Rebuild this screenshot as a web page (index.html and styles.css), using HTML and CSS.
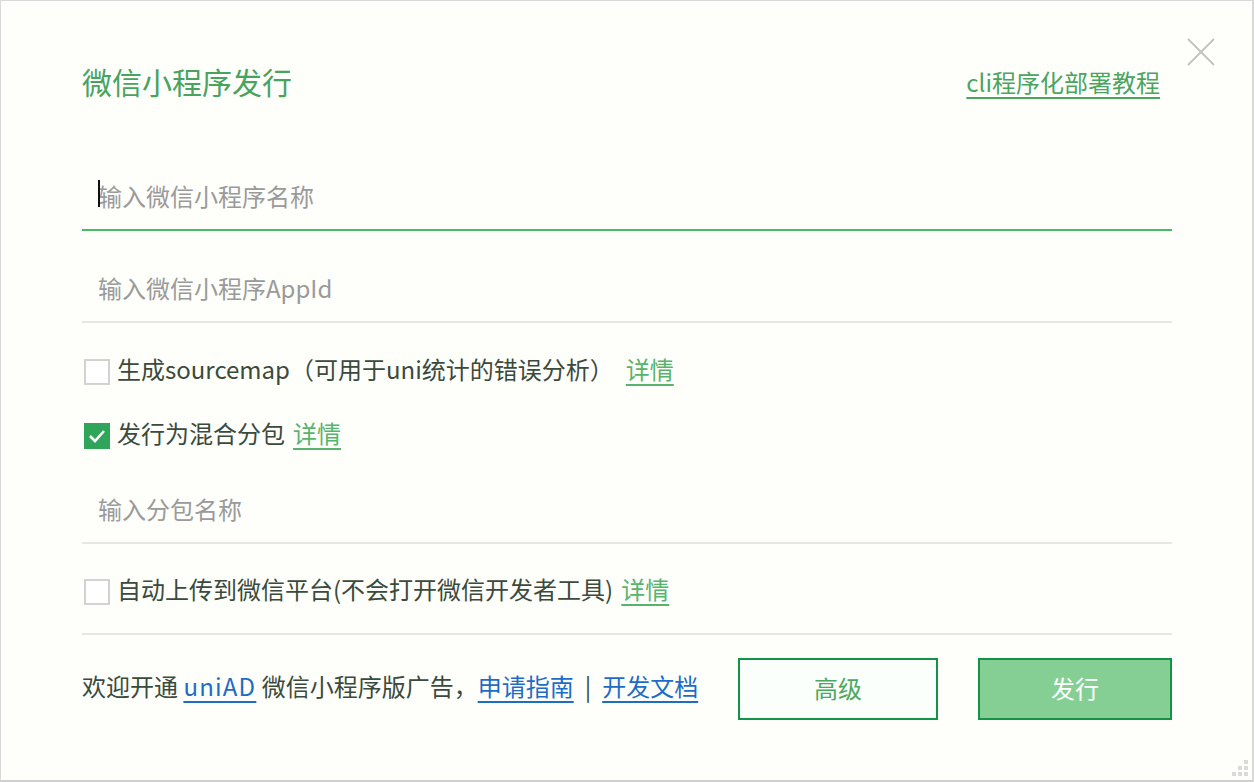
FILE: index.html
```html
<!DOCTYPE html>
<html>
  <head>
    <title>微信小程序发行</title>
    <link rel="stylesheet" href="styles.css">
  </head>
  <body>
    <div class="dialog">
      <svg class="closeIcon" width="28" height="28" viewBox="0 0 28 28">
        <path d="M1 1 L27 27 M27 1 L1 27" stroke="#c2c2c2" stroke-width="1.8" fill="none"/>
      </svg>

      <div class="header">
        <h1 class="title">微信小程序发行</h1>
        <a class="cliLink">cli程序化部署教程</a>
      </div>

      <div class="field field-active">
        <input class="fieldInput" placeholder="输入微信小程序名称">
      </div>
      <div class="field field-second">
        <input class="fieldInput" placeholder="输入微信小程序AppId">
      </div>

      <div class="checkRow checkRow-first">
        <span class="checkBox"></span>
        <span class="checkLabel">生成sourcemap（可用于uni统计的错误分析）</span>
        <a class="detailLink detailLink-wide">详情</a>
      </div>
      <div class="checkRow checkRow-second">
        <span class="checkBox isChecked">
          <svg width="18" height="14" viewBox="0 0 18 14">
            <path d="M2 7 L7 12 L16 2" stroke="#fff" stroke-width="2.6" fill="none"/>
          </svg>
        </span>
        <span class="checkLabel">发行为混合分包</span>
        <a class="detailLink">详情</a>
      </div>

      <div class="field field-third">
        <input class="fieldInput" placeholder="输入分包名称">
      </div>

      <div class="checkRow checkRow-third">
        <span class="checkBox"></span>
        <span class="checkLabel">自动上传到微信平台(不会打开微信开发者工具)</span>
        <a class="detailLink">详情</a>
      </div>

      <div class="divider"></div>

      <div class="footer">
        <p class="adText">欢迎开通 <a class="blueLink blueLink-latin">uniAD</a> 微信小程序版广告，<a class="blueLink">申请指南</a><span class="separator">|</span><a class="blueLink">开发文档</a></p>
        <div class="buttons">
          <button class="btn btn-plain">高级</button>
          <button class="btn btn-main">发行</button>
        </div>
      </div>

      <div class="grip">
        <span></span><span></span><span></span>
        <span></span><span></span><span></span>
      </div>
    </div>
  </body>
</html>
```

FILE: styles.css
```css
body {
  margin: 0;
  font-family: "Noto Sans CJK SC", "Noto Sans", sans-serif;
}
.dialog {
  position: relative;
  box-sizing: border-box;
  width: 1254px;
  height: 782px;
  padding: 50px 80px 0 81px;
  background-color: #fefefa;
  border: 1px solid #d9d9d9;
  border-right-width: 2px;
  border-bottom: 2px solid #cfcfcf;
  color: #3a4a3c;
}
.closeIcon {
  position: absolute;
  top: 37px;
  left: 1186px;
}
.header {
  display: flex;
  justify-content: space-between;
  align-items: center;
  height: 60px;
}
.title {
  margin: 0;
  font-size: 30px;
  font-weight: normal;
  color: #47a35d;
}
.cliLink {
  font-size: 24px;
  color: #4aa55f;
  text-decoration: underline;
  text-underline-offset: 5px;
  text-decoration-thickness: 2px;
  margin-right: 12px;
}
.field {
  position: relative;
}
.field-active {
  margin-top: 62px;
}
.field-active::before {
  content: "";
  position: absolute;
  left: 16px;
  top: 7px;
  width: 2px;
  height: 27px;
  background-color: #111;
}
.field-second {
  margin-top: 34px;
}
.field-third {
  margin-top: 30px;
}
.fieldInput {
  display: block;
  box-sizing: border-box;
  width: 100%;
  height: 58px;
  padding: 0 16px 12px 16px;
  border: none;
  border-bottom: 2px solid #e6e6e4;
  background: transparent;
  font-family: inherit;
  font-size: 24px;
  color: #333;
  outline: none;
}
.field-active .fieldInput {
  border-bottom-color: #4cb964;
}
.fieldInput::placeholder {
  color: #9a9a9a;
}
.checkRow {
  display: flex;
  align-items: center;
  height: 40px;
  font-size: 24px;
}
.checkRow-first {
  margin-top: 29px;
}
.checkRow-second {
  margin-top: 24px;
}
.checkRow-third {
  margin-top: 28px;
}
.checkBox {
  display: flex;
  align-items: center;
  justify-content: center;
  box-sizing: border-box;
  width: 26px;
  height: 26px;
  margin-left: 2px;
  margin-right: 7px;
  border: 2px solid #d2d2d2;
  background-color: #fff;
}
.isChecked {
  border-color: #2ea559;
  background-color: #2ea559;
}
.checkLabel {
  margin-bottom: 7px;
  color: #3a4a3c;
}
.detailLink {
  margin-left: 8px;
  margin-bottom: 7px;
  color: #58b46c;
  text-decoration: underline;
  text-underline-offset: 5px;
}
.detailLink-wide {
  margin-left: 12px;
}
.divider {
  margin-top: 21px;
  height: 2px;
  background-color: #e6e6e4;
}
.footer {
  display: flex;
  justify-content: space-between;
  align-items: center;
  margin-top: 23px;
}
.adText {
  margin: 0 0 8px 0;
  font-size: 24px;
  color: #3a4a3c;
}
.blueLink {
  color: #1d6cc6;
  text-decoration: underline;
  text-underline-offset: 5px;
}
.blueLink-latin {
  letter-spacing: 1.2px;
}
.separator {
  margin: 0 11px;
}
.buttons {
  display: flex;
  gap: 40px;
}
.btn {
  box-sizing: border-box;
  height: 62px;
  padding-bottom: 5px;
  border: 2px solid #129345;
  font-family: inherit;
  font-size: 24px;
  cursor: pointer;
}
.btn-plain {
  width: 200px;
  background-color: #fbfffb;
  color: #4ca860;
}
.btn-main {
  width: 194px;
  background-color: #86cf94;
  color: #fff;
}
.grip {
  position: absolute;
  right: 4px;
  bottom: 4px;
  display: grid;
  grid-template-columns: repeat(3, 4px);
  grid-template-rows: repeat(3, 4px);
  gap: 2px;
}
.grip span {
  background-color: #dadada;
}
.grip span:nth-child(1) { grid-area: 1 / 3; }
.grip span:nth-child(2) { grid-area: 2 / 2; }
.grip span:nth-child(3) { grid-area: 2 / 3; }
.grip span:nth-child(4) { grid-area: 3 / 1; }
.grip span:nth-child(5) { grid-area: 3 / 2; }
.grip span:nth-child(6) { grid-area: 3 / 3; }
```
